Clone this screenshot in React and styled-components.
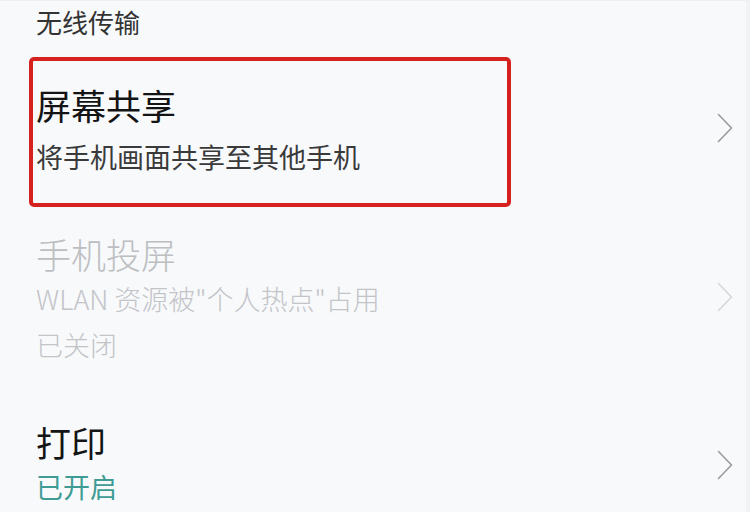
import React from 'react';
import styled, { createGlobalStyle } from 'styled-components';

const GlobalStyle = createGlobalStyle`
  html, body {
    margin: 0;
    padding: 0;
    background: #f8f9fb;
  }
  body {
    font-family: "Noto Sans CJK SC", "Noto Sans", sans-serif;
  }
`;

const Page = styled.div`
  width: 750px;
  height: 512px;
  box-sizing: border-box;
  padding-left: 36px;
  background: #f8f9fb;
  border-top: 1px solid #eef0f3;
  border-right: 4px solid #f1f2f4;
  overflow: hidden;
`;

const SectionTitle = styled.div`
  margin-top: 3px;
  margin-bottom: 17px;
  font-size: 26px;
  line-height: 36px;
  color: #333;
`;

const Item = styled.div`
  position: relative;
  display: flex;
  align-items: center;
  padding: 26px 0;
`;

const Highlight = styled.div`
  position: absolute;
  left: -7px;
  top: 0;
  bottom: -1px;
  width: 482px;
  box-sizing: border-box;
  border: 4px solid #d6221f;
  border-radius: 5px;
  pointer-events: none;
`;

const Texts = styled.div`
  flex: 1;
  display: flex;
  flex-direction: column;
  gap: ${p => p.$gap || 0}px;
`;

const Title = styled.div`
  font-size: 35px;
  line-height: 44px;
  color: ${p => (p.$disabled ? '#bcbec2' : '#141414')};
  font-weight: ${p => (p.$disabled ? 300 : 400)};
`;

const Sub = styled.div`
  font-size: 27px;
  line-height: 46px;
  font-weight: ${p => (p.$disabled ? 300 : 400)};
  color: ${p =>
    p.$tone === 'on' ? '#3f9c95' : p.$disabled ? '#c2c4c8' : '#3a3a3a'};
`;

const Chevron = styled.svg`
  width: 16px;
  height: 30px;
  margin-right: 13px;
  margin-bottom: ${p => p.$lift || 0}px;
  flex-shrink: 0;
`;

const Arrow = ({ light, lift }) => (
  <Chevron viewBox="0 0 16 30" $lift={lift}>
    <path
      d="M1.5 1.5 L14.5 15 L1.5 28.5"
      fill="none"
      stroke={light ? '#d6d7da' : '#9a9b9e'}
      strokeWidth="1.6"
      strokeLinecap="round"
      strokeLinejoin="round"
    />
  </Chevron>
);

export default function App() {
  return (
    <>
      <GlobalStyle />
      <Page>
        <SectionTitle>无线传输</SectionTitle>

        <Item>
          <Highlight />
          <Texts $gap={7}>
            <Title>屏幕共享</Title>
            <Sub>将手机画面共享至其他手机</Sub>
          </Texts>
          <Arrow lift={8} />
        </Item>

        <Item>
          <Texts>
            <Title $disabled>手机投屏</Title>
            <Sub $disabled>WLAN 资源被"个人热点"占用</Sub>
            <Sub $disabled>已关闭</Sub>
          </Texts>
          <Arrow light lift={6} />
        </Item>

        <Item>
          <Texts>
            <Title>打印</Title>
            <Sub $tone="on">已开启</Sub>
          </Texts>
          <Arrow lift={0} />
        </Item>
      </Page>
    </>
  );
}
